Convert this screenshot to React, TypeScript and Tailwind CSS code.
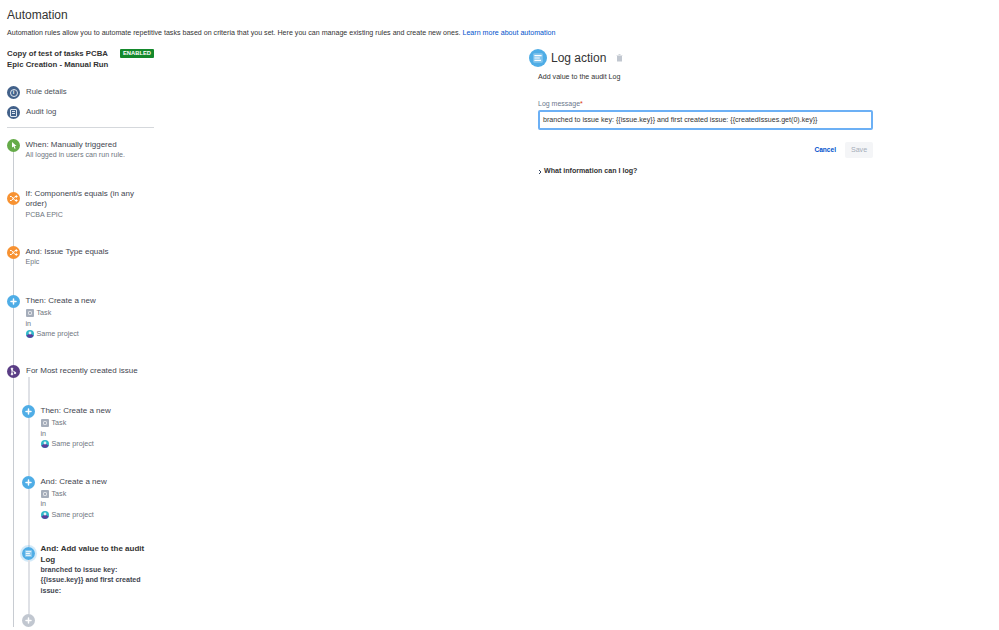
import type { ReactNode } from "react";

function Circle({ bg, children }: { bg: string; children: ReactNode }) {
  return (
    <span className={`flex h-[13px] w-[13px] shrink-0 items-center justify-center rounded-full ${bg}`}>
      {children}
    </span>
  );
}

const PlusIcon = () => (
  <svg width="7" height="7" viewBox="0 0 7 7">
    <path d="M3.5 1v5M1 3.5h5" stroke="#fff" strokeWidth="1.5" strokeLinecap="round" />
  </svg>
);

const ShuffleIcon = () => (
  <svg width="9" height="9" viewBox="0 0 9 9" fill="none" stroke="#fff" strokeWidth="1">
    <path d="M1 2.5h1.5l3.5 4h2M1 6.5h1.5l3.5-4h2" />
    <path d="M7 1.2l1.2 1.3L7 3.8M7 5.2l1.2 1.3L7 7.8" />
  </svg>
);

const CursorIcon = () => (
  <svg width="8" height="9" viewBox="0 0 8 9">
    <path d="M2 1l4.5 4H4.6l1 2.4-1 .4-1-2.4L2 6.6z" fill="#fff" />
  </svg>
);

const BranchIcon = () => (
  <svg width="9" height="9" viewBox="0 0 9 9" fill="none" stroke="#fff" strokeWidth="1">
    <path d="M3 2v5M3 3c0 1.500 3 1 3 2.500" />
    <circle cx="3" cy="1.800" r=".8" fill="#fff" />
    <circle cx="3" cy="7.200" r=".8" fill="#fff" />
    <circle cx="6" cy="6" r=".8" fill="#fff" />
  </svg>
);

const LogLines = ({ size }: { size: number }) => (
  <svg width={size} height={size} viewBox="0 0 10 10">
    <rect x="1" y="1" width="8" height="8" rx="1" fill="#fff" fillOpacity=".3" />
    <path d="M2 3h6M2 5h4.500M2 7h5.500" stroke="#fff" strokeWidth="1" />
  </svg>
);

const TaskGlyph = () => (
  <span className="flex h-[8px] w-[8px] items-center justify-center rounded-[1px] bg-[#a5adba]">
    <span className="h-[4px] w-[4px] rounded-[1px] border border-[#dfe1e6]" />
  </span>
);

const ProjectGlyph = () => (
  <svg width="8" height="8" viewBox="0 0 8 8">
    <circle cx="4" cy="4" r="4" fill="#2fb8c9" />
    <path d="M0.300 5.500A4 4 0 0 0 7.700 5.500L4 3.500z" fill="#5b3f9c" />
    <circle cx="4" cy="3" r="1.400" fill="#e9eef5" />
  </svg>
);

function CreateBody() {
  return (
    <div className="mt-[2px] text-[7.200px] text-[#6f7680]">
      <div className="flex items-center gap-[3px]">
        <TaskGlyph />
        <span>Task</span>
      </div>
      <div>in</div>
      <div className="flex items-center gap-[3px]">
        <ProjectGlyph />
        <span>Same project</span>
      </div>
    </div>
  );
}

function Step({
  icon,
  title,
  bold,
  line = "outer",
  offset,
  pad,
  children,
}: {
  icon: ReactNode;
  title: ReactNode;
  bold?: boolean;
  line?: "outer" | "nested" | "none";
  offset?: string;
  pad: string;
  children?: ReactNode;
}) {
  const lineClass = line === "nested" ? "w-[2px] bg-[#dfe1e6]" : "w-px bg-[#c8ccd2]";
  return (
    <div className="flex gap-[5.500px]">
      <div className="flex w-[13px] shrink-0 flex-col items-center">
        {offset && <div className={`${offset} ${lineClass}`} />}
        {icon}
        {line !== "none" && <div className={`flex-1 ${lineClass}`} />}
      </div>
      <div className={`min-w-0 flex-1 pt-px ${pad}`}>
        <div className={bold ? "font-bold text-[#333]" : "text-[#3f4650]"}>{title}</div>
        {children}
      </div>
    </div>
  );
}

export default function App() {
  return (
    <div className="h-[630px] w-[999px] overflow-hidden bg-white font-['Liberation_Sans',Arial,sans-serif] text-[8px] leading-[10.400px] text-[#333]">
      <div className="px-[7px] pt-[8px]">
        <h1 className="text-[12px] leading-[15px] text-[#333]">Automation</h1>
        <p className="mt-[5px] text-[7.100px] leading-[10px]">
          Automation rules allow you to automate repetitive tasks based on criteria that you set. Here you can manage
          existing rules and create new ones. <span className="text-[#0052cc]">Learn more about automation</span>
        </p>
      </div>

      <div className="mt-[11px] flex pl-[7px]">
        <aside className="w-[147px] shrink-0">
          <div className="flex justify-between">
            <div className="text-[7.800px] font-bold leading-[10.500px] text-[#333]">
              Copy of test of tasks PCBA
              <br />
              Epic Creation - Manual Run
            </div>
            <span className="h-[9px] rounded-[1px] bg-[#14892c] px-[3px] text-[5.800px] font-bold leading-[9px] text-white">
              ENABLED
            </span>
          </div>

          <div className="mt-[16px] flex flex-col gap-[7px] text-[7.800px] text-[#4a5058]">
            <div className="flex items-center gap-[6px]">
              <Circle bg="bg-[#42618a]">
                <span className="flex h-[8px] w-[8px] items-center justify-center rounded-full border border-[#dfe6f0] text-[5.500px] font-bold leading-none text-white">
                  i
                </span>
              </Circle>
              <span>Rule details</span>
            </div>
            <div className="flex items-center gap-[6px]">
              <Circle bg="bg-[#42618a]">
                <span className="flex h-[8px] w-[7px] flex-col justify-center gap-px rounded-[1px] border border-[#dfe6f0] px-px">
                  <span className="h-px bg-[#dfe6f0]" />
                  <span className="h-px bg-[#dfe6f0]" />
                </span>
              </Circle>
              <span>Audit log</span>
            </div>
          </div>

          <div className="mb-[11px] mt-[8px] h-px bg-[#d5d8dc]" />

          <Step icon={<Circle bg="bg-[#65ab49]"><CursorIcon /></Circle>} title="When: Manually triggered" pad="pb-[27px]">
            <div className="text-[7.100px] text-[#6f7680]">All logged in users can run rule.</div>
          </Step>
          <Step
            icon={<Circle bg="bg-[#f79232]"><ShuffleIcon /></Circle>}
            title="If: Component/s equals (in any order)"
            offset="h-[4px]"
            pad="pb-[26px]"
          >
            <div className="text-[7.100px] text-[#6f7680]">PCBA EPIC</div>
          </Step>
          <Step icon={<Circle bg="bg-[#f79232]"><ShuffleIcon /></Circle>} title="And: Issue Type equals" pad="pb-[27px]">
            <div className="text-[7.100px] text-[#6f7680]">Epic</div>
          </Step>
          <Step icon={<Circle bg="bg-[#4fade6]"><PlusIcon /></Circle>} title="Then: Create a new" pad="pb-[26px]">
            <CreateBody />
          </Step>

          <div className="flex gap-[6px]">
            <div className="flex w-[13px] shrink-0 flex-col items-center">
              <Circle bg="bg-[#5a3d85]"><BranchIcon /></Circle>
              <div className="w-px flex-1 bg-[#c8ccd2]" />
            </div>
            <div className="-ml-[4px] min-w-0 flex-1">
              <div className="pl-[4px] pt-px text-[#3f4650]">For Most recently created issue</div>
              <div className="ml-[5.500px] h-[28px] w-[2px] bg-[#dfe1e6]" />
              <Step icon={<Circle bg="bg-[#4fade6]"><PlusIcon /></Circle>} title="Then: Create a new" line="nested" pad="pb-[26px]">
                <CreateBody />
              </Step>
              <Step icon={<Circle bg="bg-[#4fade6]"><PlusIcon /></Circle>} title="And: Create a new" line="nested" pad="pb-[23px]">
                <CreateBody />
              </Step>
              <Step
                icon={
                  <span className="rounded-full ring-2 ring-[#4fade6]/25">
                    <Circle bg="bg-[#4fade6]"><LogLines size={9} /></Circle>
                  </span>
                }
                title="And: Add value to the audit Log"
                bold
                line="nested"
                offset="h-[4px]"
                pad="pb-[18px]"
              >
                <div className="text-[7.100px] font-bold text-[#3f4650]">
                  {"branched to issue key: {{issue.key}} and first created issue:"}
                </div>
              </Step>
              <Step icon={<Circle bg="bg-[#c1c7d0]"><PlusIcon /></Circle>} title="" line="none" pad="" />
            </div>
          </div>
        </aside>

        <main className="ml-[384px] w-[335px]">
          <div className="-ml-[9px] flex items-center gap-[4px]">
            <span className="flex h-[18px] w-[18px] items-center justify-center rounded-full bg-[#4fade6]">
              <LogLines size={12} />
            </span>
            <span className="text-[12px] leading-[18px] text-[#333]">Log action</span>
            <svg className="ml-[6px]" width="7" height="8" viewBox="0 0 7 8">
              <path d="M1 2h5v5.500H1zM0.500 1h6v.6h-6zM2.500 .3h2V1h-2z" fill="#c1c7d0" />
            </svg>
          </div>
          <p className="mt-[5px] text-[7.100px] text-[#333]">Add value to the audit Log</p>
          <label className="mt-[17px] block text-[7px] leading-[10px] text-[#6b778c]">
            Log message<span className="text-[#de350b]">*</span>
          </label>
          <div className="mt-[1px] flex h-[20px] items-center rounded-[2px] border-2 border-[#6cb0f5] px-[3px] text-[7.100px] text-[#333]">
            {"branched to issue key: {{issue.key}} and first created issue: {{createdIssues.get(0).key}}"}
          </div>
          <div className="mt-[12px] flex items-center justify-end gap-[9px] text-[7.100px]">
            <span className="text-[6.600px] font-bold text-[#0052cc]">Cancel</span>
            <span className="flex h-[16px] w-[28px] items-center justify-center rounded-[2px] bg-[#f4f5f7] text-[#a5adba]">
              Save
            </span>
          </div>
          <div className="mt-[8px] flex items-center gap-[2px] text-[7.100px] font-bold text-[#333]">
            <svg width="4" height="6" viewBox="0 0 4 6" fill="none" stroke="#344563" strokeWidth="1">
              <path d="M1 1l2 2-2 2" />
            </svg>
            <span>What information can I log?</span>
          </div>
        </main>
      </div>
    </div>
  );
}
